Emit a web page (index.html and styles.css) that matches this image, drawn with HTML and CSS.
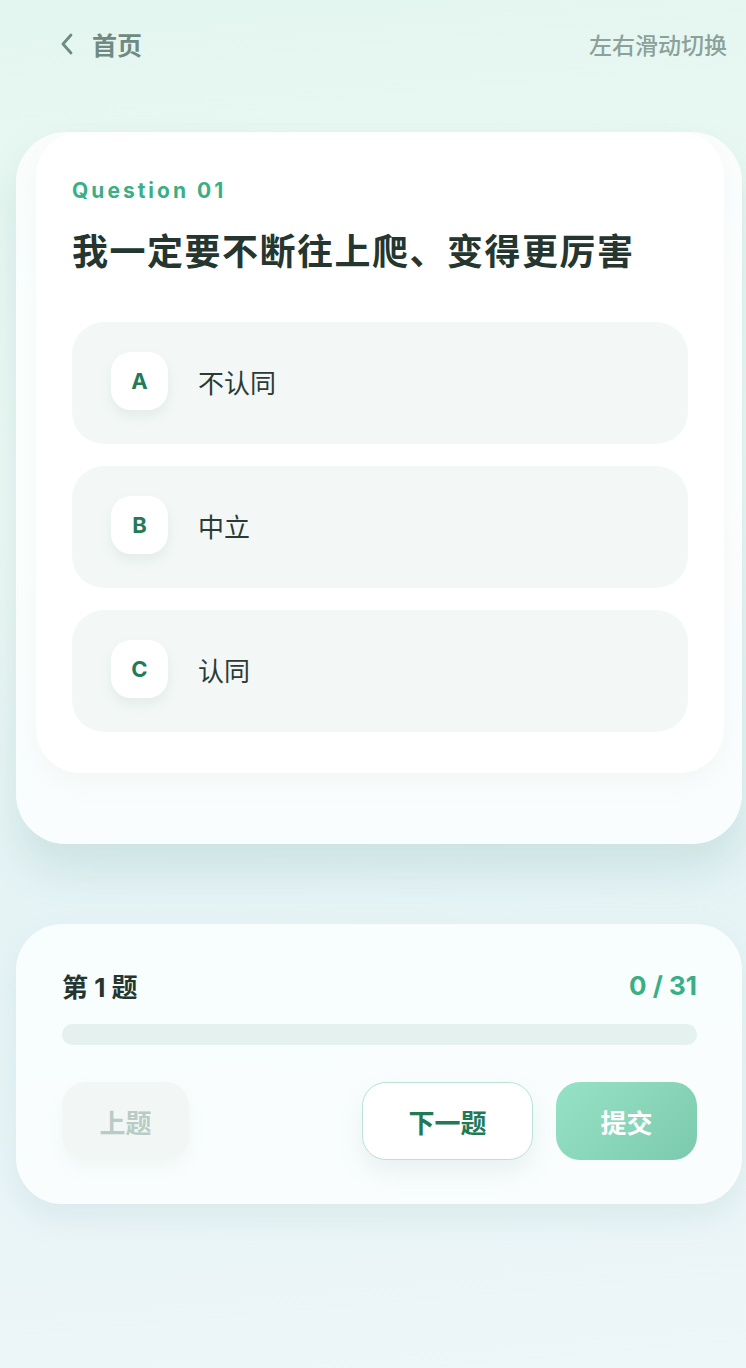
FILE: index.html
```html
<!DOCTYPE html>
<html lang="zh-CN">
<head>
  <meta charset="UTF-8" />
  <meta name="viewport" content="width=device-width, initial-scale=1" />
  <title>答题</title>
  <link rel="stylesheet" href="styles.css">
</head>
<body>
  <header class="topbar">
    <a class="back" href="#">
      <svg class="back-icon" viewBox="0 0 18 26" width="18" height="26">
        <path d="M13 4 L5 13 L13 22" fill="none" stroke="#6f8a82" stroke-width="2.8" stroke-linecap="round" stroke-linejoin="round"/>
      </svg>
      <span>首页</span>
    </a>
    <span class="hint">左右滑动切换</span>
  </header>

  <section class="stack">
    <div class="card">
      <div class="q-label">Question 01</div>
      <h1 class="q-title">我一定要不断往上爬、变得更厉害</h1>

      <div class="options">
        <div class="option">
          <span class="badge">A</span>
          <span class="opt-text">不认同</span>
        </div>
        <div class="option">
          <span class="badge">B</span>
          <span class="opt-text">中立</span>
        </div>
        <div class="option">
          <span class="badge">C</span>
          <span class="opt-text">认同</span>
        </div>
      </div>
    </div>
  </section>

  <section class="panel">
    <div class="panel-head">
      <span class="step">第 1 题</span>
      <span class="count">0 / 31</span>
    </div>
    <div class="progress"><div class="progress-fill" style="width: 0%"></div></div>
    <div class="actions">
      <button class="btn btn-prev">上题</button>
      <div class="actions-right">
        <button class="btn btn-next">下一题</button>
        <button class="btn btn-submit">提交</button>
      </div>
    </div>
  </section>
</body>
</html>
```

FILE: styles.css
```css
* {
  box-sizing: border-box;
}

body {
  margin: 0;
  min-height: 1368px;
  font-family: Inter, "Noto Sans CJK SC", sans-serif;
  background: linear-gradient(175deg, #e4f6f0 0%, #eef9f6 35%, #e5f3f5 62%, #edf6f9 100%);
  color: #24362f;
  overflow-x: hidden;
}

.topbar {
  display: flex;
  justify-content: space-between;
  align-items: center;
  height: 88px;
  padding: 0 19px 0 58px;
}

.back {
  display: flex;
  align-items: center;
  gap: 16px;
  text-decoration: none;
  color: #6f8a82;
  font-size: 25px;
  font-weight: 700;
}

.hint {
  font-size: 23px;
  font-weight: 500;
  color: #8ba19a;
}

/* card stack */
.stack {
  margin: 44px 4px 0 16px;
  height: 712px;
  padding: 0 18px 0 20px;
  border-radius: 50px;
  background: rgba(255, 255, 255, 0.78);
  box-shadow: 0 26px 40px rgba(110, 165, 155, 0.2);
}

.card {
  height: 641px;
  padding: 44px 36px 40px;
  background: #fff;
  border-radius: 44px;
  box-shadow: 0 10px 24px rgba(150, 180, 170, 0.08);
}

.q-label {
  font-size: 21px;
  font-weight: 700;
  letter-spacing: 3px;
  color: #3aae84;
  line-height: 30px;
}

.q-title {
  margin: 22px 0 46px;
  font-size: 36px;
  font-weight: 700;
  letter-spacing: 1.5px;
  line-height: 48px;
  color: #24362f;
}

.options {
  display: flex;
  flex-direction: column;
  gap: 22px;
}

.option {
  display: flex;
  align-items: center;
  gap: 30px;
  height: 122px;
  padding: 0 39px 4px;
  background: #f3f8f7;
  border-radius: 32px;
}

.badge {
  display: flex;
  align-items: center;
  justify-content: center;
  width: 57px;
  height: 58px;
  border-radius: 20px;
  background: #fff;
  box-shadow: 0 6px 12px rgba(120, 150, 140, 0.12);
  font-size: 22px;
  font-weight: 700;
  color: #237a58;
}

.opt-text {
  font-size: 26px;
  color: #2c3a35;
}

/* bottom panel */
.panel {
  margin: 80px 4px 0 16px;
  padding: 42px 45px 44px 46px;
  border-radius: 46px;
  background: rgba(250, 254, 254, 0.88);
  box-shadow: 0 14px 30px rgba(120, 170, 170, 0.14);
}

.panel-head {
  display: flex;
  justify-content: space-between;
  align-items: center;
  height: 38px;
}

.step {
  font-size: 26px;
  font-weight: 700;
  color: #24362f;
}

.count {
  font-size: 26px;
  font-weight: 700;
  color: #3aae84;
}

.progress {
  margin-top: 20px;
  height: 21px;
  border-radius: 11px;
  background: #e5f1ee;
  overflow: hidden;
}

.progress-fill {
  height: 100%;
  background: #3aae84;
}

.actions {
  display: flex;
  justify-content: space-between;
  align-items: center;
  margin-top: 37px;
}

.actions-right {
  display: flex;
  gap: 23px;
}

.btn {
  height: 78px;
  border: none;
  border-radius: 24px;
  font-family: Inter, "Noto Sans CJK SC", sans-serif;
  font-size: 26px;
  font-weight: 700;
  cursor: pointer;
}

.btn-prev {
  width: 127px;
  background: #f2f7f6;
  color: #b8cbc5;
  box-shadow: 0 8px 16px rgba(150, 180, 170, 0.08);
}

.btn-next {
  width: 171px;
  background: #fff;
  border: 1.5px solid #b9e3d4;
  color: #1f7a55;
  box-shadow: 0 12px 24px rgba(120, 160, 150, 0.12);
}

.btn-submit {
  width: 141px;
  background: linear-gradient(135deg, #96e2c6 0%, #7ccaad 100%);
  color: #fff;
}
```
